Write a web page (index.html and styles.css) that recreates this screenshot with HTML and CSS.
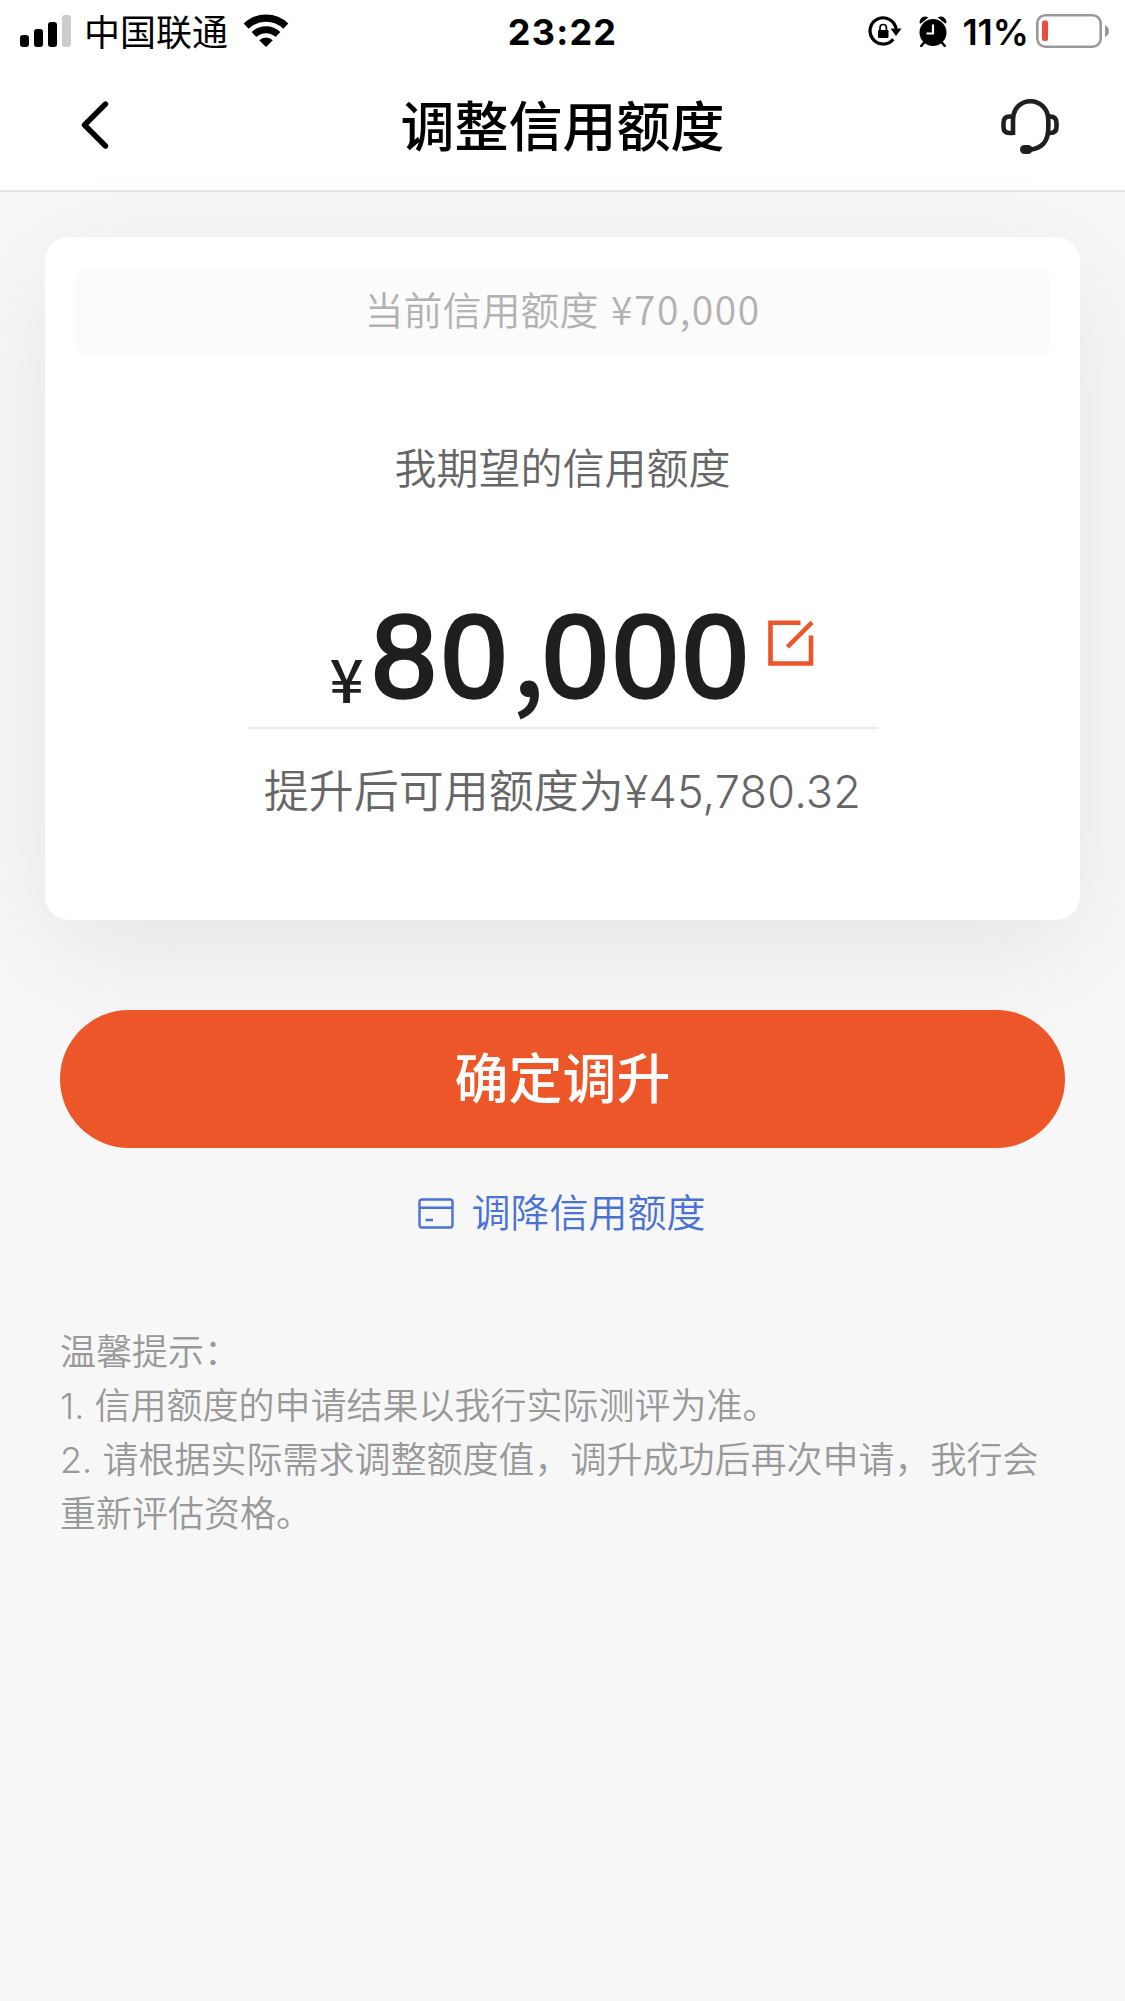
FILE: index.html
```html
<!DOCTYPE html>
<html lang="zh-CN">
<head>
<meta charset="utf-8">
<title>调整信用额度</title>
<link rel="stylesheet" href="styles.css">
</head>
<body>
<header class="header">
  <div class="status">
    <div class="status-left">
      <svg class="signal" width="51" height="32" viewBox="0 0 51 32"><rect y="20" width="9" height="12" rx="3"/><rect x="14" y="14" width="9" height="18" rx="3"/><rect x="28" y="7" width="9" height="25" rx="3"/><rect x="42" width="9" height="32" rx="3" fill="#ccc"/></svg>
      <span class="carrier">中国联通</span>
      <svg class="wifi" width="46" height="34" viewBox="0 0 46 34"><path d="M3.2 12.2A28.5 28.5 0 0 1 42.800 12.200" fill="none" stroke="#000" stroke-width="7.200"/><path d="M11 20.500A17.600 17.600 0 0 1 35 20.500" fill="none" stroke="#000" stroke-width="6.800"/><path d="M16.200 26.200a10.200 10.200 0 0 1 13.600 0L23 33z"/></svg>
    </div>
    <div class="clock">23:22</div>
    <div class="status-right">
      <svg class="rotation" width="34" height="30" viewBox="0 0 34 30"><path d="M28.100 13A13.100 13.100 0 1 0 25.300 23.200" fill="none" stroke="#000" stroke-width="3.200"/><path d="M22.600 12.500h10.900L28 20z"/><rect x="10" y="14" width="10.500" height="8" rx="1.200"/><path d="M12 14v-2.300a3.200 3.200 0 0 1 6.400 0V14" fill="none" stroke="#000" stroke-width="1.700"/></svg>
      <svg class="alarm" width="28" height="31" viewBox="0 0 28 31"><circle cx="14" cy="16.500" r="13.500"/><path d="M1.300 7A5 5 0 0 1 8.300 1.500z M19.700 1.500A5 5 0 0 1 26.700 7z" stroke="#000" stroke-width="1.200" stroke-linejoin="round"/><path d="M5.500 26 2.200 30M22.500 26l3.300 4" stroke="#000" stroke-width="2.500" stroke-linecap="round"/><path d="M14 8.500v9H7.500" fill="none" stroke="#fff" stroke-width="2.200"/></svg>
      <span class="percent">11%</span>
      <svg class="battery" width="73" height="34" viewBox="0 0 73 34"><rect x="1.300" y="1.300" width="63.400" height="31.400" rx="8" fill="none" stroke="#999" stroke-width="2.600"/><rect x="6" y="6.500" width="6" height="20.500" rx="2" fill="#eb4d3d"/><path d="M69 11q4 2 4 6t-4 6z" fill="#999"/></svg>
    </div>
  </div>
  <div class="nav">
    <svg class="back" width="28" height="48" viewBox="0 0 28 48"><path d="M24.500 3 3.500 24 24.500 45" fill="none" stroke="#000" stroke-width="5.400" stroke-linecap="round" stroke-linejoin="round"/></svg>
    <h1 class="title">调整信用额度</h1>
    <svg class="service" width="60" height="58" viewBox="0 0 60 58"><g fill="none" stroke="#1f1f1f" stroke-width="4.600"><path d="M13 37V22C13 10 21 3.200 30.500 3.200S48.300 11 48.300 22V30C48.300 43 42 51.500 28 51.500"/><path d="M13 18.500H9.500Q3.500 18.500 3.500 25V29Q3.500 35 9.500 35H13"/><path d="M48 18.500h2Q56.500 18.500 56.500 25V29Q56.500 35 50 35h-2"/></g><rect x="20" y="47" width="12.500" height="9" rx="4.500" fill="#1f1f1f"/></svg>
  </div>
</header>
<main class="content">
  <section class="card">
    <div class="current">当前信用额度 <span class="limit">¥70,000</span></div>
    <div class="label">我期望的信用额度</div>
    <div class="amount">
      <span class="yen">¥</span><span class="value">80<span class="comma">,</span>000</span>
      <svg class="edit" width="46" height="47" viewBox="0 0 46 47"><g fill="none" stroke="#ec5528" stroke-width="4.600"><path d="M32.500 2.700H2.500V43.500H43V15.500"/><path d="M19.500 27 44 2.300"/></g></svg>
    </div>
    <div class="after">提升后可用额度为<span class="sum">¥45,780.32</span></div>
  </section>
  <button class="confirm">确定调升</button>
  <a class="lower"><svg width="36" height="31" viewBox="0 0 36 31"><g fill="none" stroke="#4a72d4" stroke-width="2.400"><rect x="1.500" y="1.500" width="33" height="28" rx="2.500"/><path d="M1 9.700h33M7.500 22h7.500"/></g></svg><span>调降信用额度</span></a>
  <div class="tips">
    <p>温馨提示：</p>
    <p><span class="num">1. </span>信用额度的申请结果以我行实际测评为准。</p>
    <p><span class="num">2. </span>请根据实际需求调整额度值，调升成功后再次申请，我行会重新评估资格。</p>
  </div>
</main>
</body>
</html>
```

FILE: styles.css
```css
* { box-sizing: border-box; }
body {
  margin: 0;
  min-height: 2001px;
  background: #f7f7f7;
  font-family: "Noto Sans CJK SC", sans-serif;
  color: #000;
}
svg { display: block; flex: none; }
p, h1 { margin: 0; }
.header { height: 192px; background: #fff; border-bottom: 2px solid #e6e6e6; }
.status {
  display: grid;
  grid-template-columns: 1fr auto 1fr;
  align-items: center;
  height: 60px;
  padding: 0 16px 0 20px;
}
.status-left, .status-right { display: flex; align-items: center; }
.status-right { justify-content: flex-end; }
.carrier { margin: 0 15px 2px 13px; font-size: 36px; line-height: 58px; font-weight: 400; }
.clock { font: 700 36px/60px Inter, sans-serif; letter-spacing: 1.2px; margin-left: -4px; padding-top: 2px; }
.percent { font: 600 36px/60px Inter, sans-serif; margin: 0 7px 0 15px; padding-top: 2px; }
.alarm { margin-left: 17px; }
.nav {
  display: grid;
  grid-template-columns: 1fr auto 1fr;
  align-items: center;
  height: 130px;
  padding: 0 65px 0 81px;
}
.title { margin-right: 16px; font-size: 54px; line-height: 128px; height: 130px; font-weight: 500; }
.service { justify-self: end; margin-top: 3px; }
.content { display: flex; flex-direction: column; padding: 45px 45px 0; }
.card {
  display: flex;
  flex-direction: column;
  align-items: center;
  height: 683px;
  padding: 30px;
  border-radius: 24px;
  background: #fff;
  box-shadow: 0 30px 120px rgba(0, 0, 0, .075);
}
.current {
  align-self: stretch;
  height: 90px;
  border-radius: 12px;
  background: #fbfbfb;
  color: #b2b2b2;
  font-size: 39px;
  font-weight: 350;
  line-height: 82px;
  text-align: center;
}
.limit { margin-left: 4px; letter-spacing: 1.5px; }
.label { margin-top: 79px; font-size: 42px; line-height: 60px; font-weight: 350; color: #666; }
.amount {
  display: flex;
  align-items: flex-start;
  width: 630px;
  height: 171px;
  margin-top: 62px;
  padding-left: 82px;
  border-bottom: 2px solid #ececec;
  color: #1f1f1f;
}
.yen { width: 42px; font-size: 60px; font-weight: 500; line-height: 237px; }
.value {
  width: 383px;
  font-family: "Liberation Sans", sans-serif;
  font-size: 117px;
  line-height: 197px;
  letter-spacing: 5px;
  white-space: nowrap;
  -webkit-text-stroke: 3.500px #1f1f1f;
}
.comma {
  display: inline-block;
  width: 31px;
  font-family: "Noto Sans CJK SC", sans-serif;
  font-size: 112px;
  font-weight: 500;
  line-height: 100px;
  letter-spacing: 0;
  -webkit-text-stroke: 0;
}
.edit { margin: 62px 0 0 13px; }
.after { margin-top: 28px; font-size: 45px; line-height: 64px; font-weight: 350; color: #666; white-space: nowrap; }
.sum { font-family: Inter, sans-serif; font-weight: 350; letter-spacing: .2px; }
.confirm {
  height: 138px;
  margin: 90px 15px 0;
  padding: 0 0 7px;
  border: 0;
  border-radius: 69px;
  background: #ec5628;
  color: #fff;
  font: 500 54px/130px "Noto Sans CJK SC", sans-serif;
}
.lower {
  display: flex;
  align-items: center;
  align-self: center;
  gap: 17px;
  height: 60px;
  margin: 35px 1px 0 0;
  color: #4a72d4;
  font-size: 39px;
  font-weight: 350;
  line-height: 60px;
}
.lower span { margin-bottom: 7px; }
.tips { margin: 79px 15px 0; color: #999; font-size: 36px; line-height: 54px; font-weight: 350; }
.num { font-family: Inter, sans-serif; font-weight: 300; line-height: 40px; }
```
